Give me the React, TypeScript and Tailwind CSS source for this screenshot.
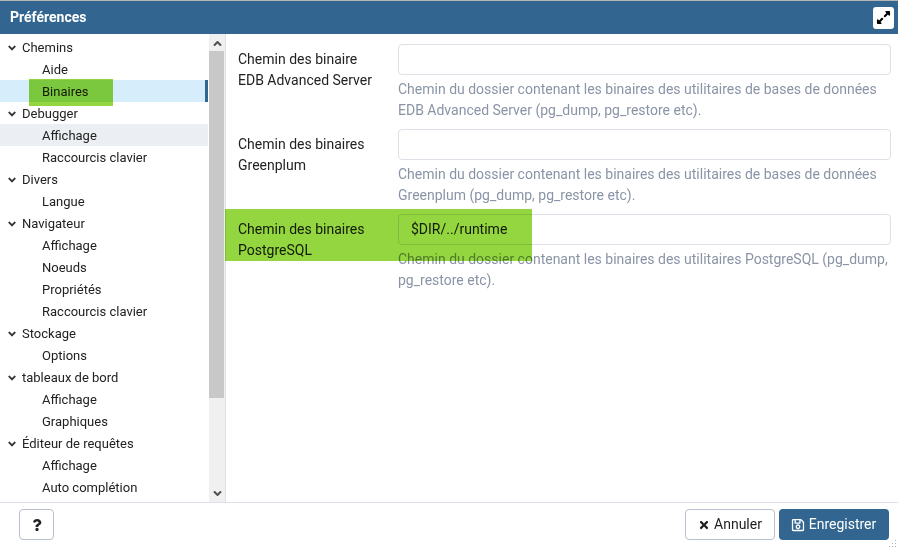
import React from "react";
import { FaExpandAlt, FaQuestion, FaTimes, FaRegSave, FaAngleDown, FaAngleUp } from "react-icons/fa";

interface ITreeRow {
    label: string;
    children: string[];
}

const tree: ITreeRow[] = [
    { label: "Chemins", children: ["Aide", "Binaires"] },
    { label: "Debugger", children: ["Affichage", "Raccourcis clavier"] },
    { label: "Divers", children: ["Langue"] },
    { label: "Navigateur", children: ["Affichage", "Noeuds", "Propriétés", "Raccourcis clavier"] },
    { label: "Stockage", children: ["Options"] },
    { label: "tableaux de bord", children: ["Affichage", "Graphiques"] },
    { label: "Éditeur de requêtes", children: ["Affichage", "Auto complétion"] },
];

interface IField {
    label: string[];
    value: string;
    help: string[];
}

const fields: IField[] = [
    {
        label: ["Chemin des binaire", "EDB Advanced Server"],
        value: "",
        help: ["Chemin du dossier contenant les binaires des utilitaires de bases de données", "EDB Advanced Server (pg_dump, pg_restore etc)."],
    },
    {
        label: ["Chemin des binaires", "Greenplum"],
        value: "",
        help: ["Chemin du dossier contenant les binaires des utilitaires de bases de données", "Greenplum (pg_dump, pg_restore etc)."],
    },
    {
        label: ["Chemin des binaires", "PostgreSQL"],
        value: "$DIR/../runtime",
        help: ["Chemin du dossier contenant les binaires des utilitaires PostgreSQL (pg_dump,", "pg_restore etc)."],
    },
];

const App = () => (
    <div className="relative w-[898px] h-[549px] flex flex-col overflow-hidden bg-white border-t border-[#b5b5b5] font-['Roboto',sans-serif] text-[#222222]">
        <div className="h-[33px] shrink-0 bg-[#326690] flex items-center justify-between pl-[10px] pr-[4px]">
            <span className="text-white text-[14px] font-bold">Préférences</span>
            <button className="w-[21px] h-[22px] bg-white rounded-[3px] flex items-center justify-center text-black">
                <FaExpandAlt className="w-[15px] h-[15px]" />
            </button>
        </div>
        <div className="flex-1 flex min-h-0">
            <div className="w-[226px] shrink-0 flex border-r border-[#dde0e6] pt-[2px]">
                <div className="w-[209px] shrink-0 overflow-hidden">
                    {tree.map(group => (
                        <div key={group.label}>
                            <div className="h-[22px] flex items-center text-[13px] pl-[6px] pt-[2px]">
                                <FaAngleDown className="w-[12px] h-[12px] mr-[4px] text-[#333333]" />
                                <span className="-mt-[2px] pt-px">{group.label}</span>
                            </div>
                            {group.children.map((child, i) => {
                                const selected = child === "Binaires";
                                const hovered = group.label === "Debugger" && i === 0;
                                return (
                                    <div
                                        key={child}
                                        className={
                                            selected
                                                ? "h-[22px] flex items-center text-[13px] pl-[42px] pt-[2px] bg-[#d6edfb] border-r-[3px] border-[#326690] mr-px"
                                                : hovered
                                                  ? "h-[22px] flex items-center text-[13px] pl-[42px] pt-[2px] bg-[#ebeef3] mr-px"
                                                  : "h-[22px] flex items-center text-[13px] pl-[42px] pt-[2px]"
                                        }
                                    >
                                        {child}
                                    </div>
                                );
                            })}
                        </div>
                    ))}
                </div>
                <div className="w-[16px] shrink-0 flex flex-col bg-[#f0f0f0] text-[#505050] -mt-[2px] pt-[1px]">
                    <div className="h-[16px] flex items-center justify-center">
                        <FaAngleUp className="w-[13px] h-[13px]" />
                    </div>
                    <div className="h-[347px] bg-[#c8c8c8] mr-px" />
                    <div className="flex-1 flex items-end justify-center pb-[2px]">
                        <FaAngleDown className="w-[13px] h-[13px]" />
                    </div>
                </div>
            </div>
            <div className="flex-1 pl-[12px] pr-[7px] pt-[10px] flex flex-col gap-[8px]">
                {fields.map(field => (
                    <div key={field.label.join(" ")} className="h-[77px] flex">
                        <div className="w-[160px] shrink-0 text-[14px] leading-[21px] pt-[5px]">
                            {field.label.map(line => <div key={line}>{line}</div>)}
                        </div>
                        <div className="flex-1 min-w-0">
                            <div className="h-[31px] border border-[#dde0e6] rounded-[4px] px-[12px] flex items-center text-[14px]">
                                {field.value}
                            </div>
                            <div className="mt-[4px] text-[14px] leading-[21px] text-[#8a94a6] whitespace-nowrap">
                                {field.help.map(line => <div key={line}>{line}</div>)}
                            </div>
                        </div>
                    </div>
                ))}
            </div>
        </div>
        <div className="h-[47px] shrink-0 border-t border-[#dde0e6] flex items-center justify-between pl-[19px] pr-[9px] pb-[3px]">
            <button className="w-[35px] h-[31px] border border-[#b8bfcc] rounded-[4px] flex items-center justify-center text-[#222222]">
                <FaQuestion className="w-[10px] h-[12px]" />
            </button>
            <div className="flex gap-[4px]">
                <button className="w-[90px] h-[31px] border border-[#b8c0cf] rounded-[4px] flex items-center justify-center gap-[4px] text-[14px] text-[#222222]">
                    <FaTimes className="w-[12px] h-[12px]" />
                    Annuler
                </button>
                <button className="w-[110px] h-[31px] bg-[#326690] rounded-[4px] flex items-center justify-center gap-[4px] text-[14px] text-white pr-px">
                    <FaRegSave className="w-[14px] h-[14px]" />
                    Enregistrer
                </button>
            </div>
        </div>
        <svg className="absolute right-px bottom-px w-[8px] h-[8px] text-[#b5b5b5]" viewBox="0 0 8 8" fill="currentColor">
            <rect x="6" y="0" width="1" height="1" />
            <rect x="3" y="3" width="1" height="1" />
            <rect x="6" y="3" width="1" height="1" />
            <rect x="0" y="6" width="1" height="1" />
            <rect x="3" y="6" width="1" height="1" />
            <rect x="6" y="6" width="1" height="1" />
        </svg>
        <div className="absolute top-[78px] left-[29px] w-[84px] h-[27px] bg-[#93d63f] mix-blend-multiply" />
        <div className="absolute top-[208px] left-[225px] w-[307px] h-[52px] bg-[#93d63f] mix-blend-multiply" />
    </div>
);

export default App;
